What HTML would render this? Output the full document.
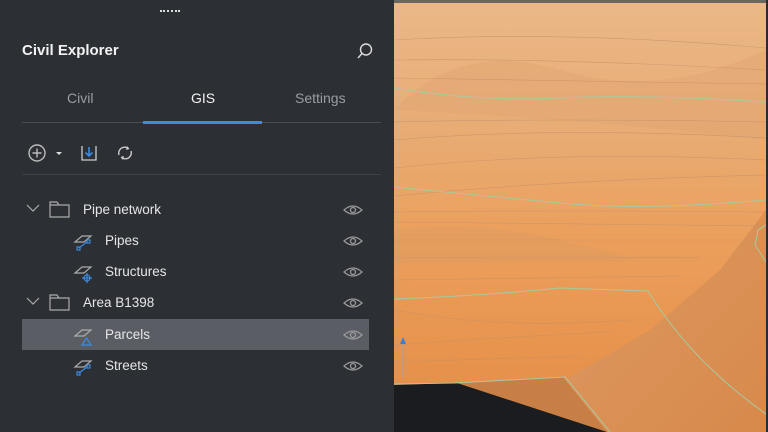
<!DOCTYPE html>
<html><head><style>
*{margin:0;padding:0;box-sizing:border-box}
body{width:768px;height:432px;overflow:hidden;background:#1b1c1f;font-family:"Liberation Sans",sans-serif;position:relative}
#panel{position:absolute;left:0;top:0;width:394px;height:432px;background:#2c2f34}
.t{position:absolute;color:#e6e6e6;font-size:13.5px;white-space:nowrap}
svg{position:absolute}
</style></head><body>
<svg style="left:394px;top:0" width="374" height="432" viewBox="394 0 374 432">
<defs>
<linearGradient id="g" x1="0" y1="0" x2="0" y2="1">
<stop offset="0" stop-color="#eab888"/><stop offset="0.3" stop-color="#e8ac74"/>
<stop offset="0.55" stop-color="#eb9f5c"/><stop offset="1" stop-color="#e58c44"/></linearGradient>
<linearGradient id="g2" x1="0" y1="0" x2="1" y2="1">
<stop offset="0" stop-color="#dc9a62"/><stop offset="1" stop-color="#d8894b"/></linearGradient>
</defs>
<rect x="394" y="0" width="374" height="432" fill="url(#g)"/>
<rect x="394" y="0" width="374" height="3" fill="#6b6660"/>
<path d="M394 110 Q460 40 560 70 T766 50 L766 140 Q600 120 394 110Z" fill="#dfa474" opacity="0.45"/>
<path d="M394 230 Q480 220 560 240 L640 260 L394 265Z" fill="#d99a63" opacity="0.35"/>
<path d="M568 378 L650 330 L720 270 L766 210 L766 432 L607 432 L563 377Z" fill="url(#g2)"/>
<path d="M394 385 L457 383 L563 377 L607 432 L394 432Z" fill="#c77f45"/>
<path d="M394 385 L457 383 L607 432 L394 432Z" fill="#1b1c1f"/>
<g fill="none" stroke="#c08f6a" stroke-width="0.6" opacity="0.7">
<path d="M394 40 Q560 30 766 48"/><path d="M394 60 Q560 58 766 70"/>
<path d="M394 78 Q560 80 766 84"/><path d="M394 122 Q560 118 766 122"/>
<path d="M394 140 Q560 126 766 138"/><path d="M394 168 Q560 150 766 160"/>
<path d="M394 196 Q560 180 766 175"/><path d="M394 212 Q560 210 766 212"/>
<path d="M394 222 Q560 224 766 226"/><path d="M394 240 Q560 240 740 240"/>
<path d="M394 258 Q560 256 700 258"/><path d="M394 280 Q560 278 680 276"/>
<path d="M394 310 Q500 330 630 320"/><path d="M394 345 Q520 336 610 332"/>
<path d="M394 362 Q520 358 580 356"/>
</g>
<g fill="none" stroke="#a8c9a0" stroke-width="1">
<path d="M394 88 Q480 102 560 98 T766 102"/>
<path d="M394 187 Q480 195 560 203 T766 200"/>
<path d="M394 299 Q480 296 560 288 L648 291 Q690 360 766 414"/>
<path d="M394 384 L455 383 L565 377 L610 432"/>
<path d="M766 225 L758 230 L755 245 L766 262"/>
</g>
<line x1="403" y1="340" x2="403" y2="378" stroke="#9aa0b0" stroke-width="1"/>
<path d="M400 344 L403 337 L406 344Z" fill="#3a7ed8"/>
<rect x="766" y="0" width="2" height="432" fill="#2a2b2e"/>
</svg>
<div id="panel">
<div style="position:absolute;left:160px;top:10px;width:20px;height:3px;border-top:2px dotted #ddd"></div>
<div class="t" style="left:22px;top:42px;font-size:15px;font-weight:bold;color:#f2f2f2">Civil Explorer</div>
<svg style="left:356px;top:42px" width="18" height="18"><circle cx="10" cy="7.5" r="5.5" fill="none" stroke="#ddd" stroke-width="1.4"/><line x1="6" y1="11.5" x2="2" y2="16" stroke="#ddd" stroke-width="1.4"/></svg>
<div class="t" style="left:67px;top:90px;font-size:14px;color:#9a9da2">Civil</div>
<div class="t" style="left:191px;top:90px;font-size:14px;color:#f2f2f2">GIS</div>
<div class="t" style="left:295px;top:90px;font-size:14px;color:#9a9da2">Settings</div>
<div style="position:absolute;left:22px;top:122px;width:359px;height:1px;background:#4a4d52"></div>
<div style="position:absolute;left:143px;top:121px;width:119px;height:3px;background:#3b8ae0"></div>
<svg style="left:26px;top:142px" width="120" height="22">
<circle cx="11" cy="11" r="8" fill="none" stroke="#bbb" stroke-width="1.4"/><path d="M11 6.5V15.5M6.5 11H15.5" stroke="#bbb" stroke-width="1.4"/>
<path d="M30 10h6l-3 3z" fill="#ddd"/>
<path d="M56 4v14h14V4" fill="none" stroke="#ccc" stroke-width="1.3"/><path d="M63 5v9M59.5 10.5l3.5 3.5 3.5-3.5" fill="none" stroke="#3b8ae0" stroke-width="1.6"/>
<path d="M93 13a6 6 0 0 1 9.5-6.5M105 9a6 6 0 0 1-9.5 6.5" fill="none" stroke="#ccc" stroke-width="1.4"/><path d="M101 4l2.5 3-3.5 1zM97 18l-2.5-3 3.5-1z" fill="#ccc"/>
</svg>
<div style="position:absolute;left:22px;top:174px;width:359px;height:1px;background:#3e4146"></div>
<div style="position:absolute;left:22px;top:319px;width:347px;height:31px;background:#5a5e64"></div>
<svg style="left:0;top:190px" width="394" height="190">
<g fill="none" stroke="#aaa" stroke-width="1.2">
<path d="M27 15l6 6 6-6M27 108l6 6 6-6"/>
<path d="M50 12h7l2 3h10v12H50z M50 15h19"/><path d="M50 105h7l2 3h10v12H50z M50 108h19"/>
</g>
<g fill="none" stroke="#aaa" stroke-width="1.2">
<path d="M75 52l7-6h9l-7 6z"/><path d="M75 83l7-6h9l-7 6z"/><path d="M75 146l7-6h9l-7 6z"/><path d="M75 177l7-6h9l-7 6z"/>
</g>
<g fill="none" stroke="#3b8ae0" stroke-width="1.2">
<path d="M79 58l8-6"/><rect x="77" y="57" width="3" height="3"/><rect x="87" y="50" width="3" height="3"/>
<path d="M79 183l8-6"/><rect x="77" y="182" width="3" height="3"/><rect x="87" y="175" width="3" height="3"/>
<circle cx="87" cy="88" r="3"/><path d="M87 83v10M82 88h10"/>
<path d="M82 155l4.5-7 4.5 7z"/>
</g>
<g fill="none" stroke="#9a9a9a" stroke-width="1.3">
<path d="M344 20q9-8 18 0q-9 8-18 0z"/><circle cx="353" cy="20" r="2.5"/>
<path d="M344 51q9-8 18 0q-9 8-18 0z"/><circle cx="353" cy="51" r="2.5"/>
<path d="M344 82q9-8 18 0q-9 8-18 0z"/><circle cx="353" cy="82" r="2.5"/>
<path d="M344 113q9-8 18 0q-9 8-18 0z"/><circle cx="353" cy="113" r="2.5"/>
<path d="M344 145q9-8 18 0q-9 8-18 0z"/><circle cx="353" cy="145" r="2.5"/>
<path d="M344 176q9-8 18 0q-9 8-18 0z"/><circle cx="353" cy="176" r="2.5"/>
</g>
</svg>
<div class="t" style="left:83px;top:202px">Pipe network</div>
<div class="t" style="left:105px;top:233px">Pipes</div>
<div class="t" style="left:105px;top:264px">Structures</div>
<div class="t" style="left:83px;top:295px">Area B1398</div>
<div class="t" style="left:105px;top:327px">Parcels</div>
<div class="t" style="left:105px;top:358px">Streets</div>
</div>
</body></html>
